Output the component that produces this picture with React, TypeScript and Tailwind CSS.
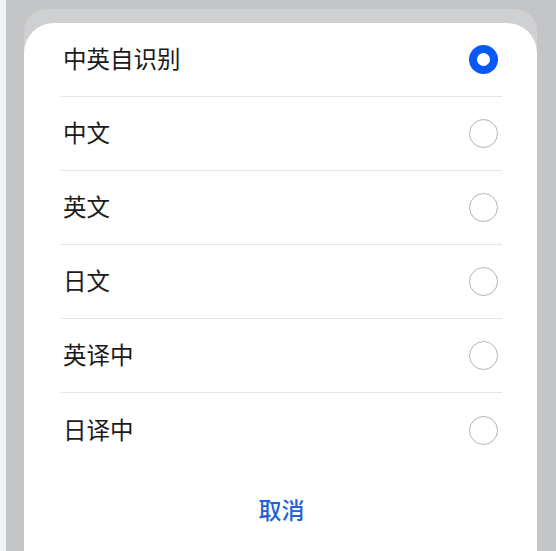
const options = ["中英自识别", "中文", "英文", "日文", "英译中", "日译中"]

function Radio({ checked }: { checked: boolean }) {
  if (checked) {
    return (
      <span className="w-[29px] h-[29px] rounded-full border-[8px] border-[#0a59f7] bg-white" />
    )
  }
  return <span className="w-[29px] h-[29px] rounded-full border-[1.5px] border-[#b4b4b4] bg-white" />
}

export default function App() {
  return (
    <div
      className="w-[556px] h-[551px] overflow-hidden flex bg-[#c4c5c7]"
      style={{ fontFamily: '"Noto Sans CJK SC", "Noto Sans", sans-serif' }}
    >
      <div className="w-[6px] h-full bg-[#f1f2f4]" />
      <div className="ml-[18px] mt-[9px] w-[513px] bg-[#cfd0d1] rounded-t-[22px] pt-[14px]">
        <div className="bg-white rounded-[30px] h-[560px] pl-[37px] pr-[35px]">
          {options.map((label, i) => (
            <div
              key={label}
              className={`h-[74px] flex items-center justify-between ${
                i < options.length - 1 ? "border-b border-[#e6e6e6]" : ""
              }`}
            >
              <span className="pl-[2px] mb-[1px] text-[23.5px] text-[#1b1b1b] leading-none">{label}</span>
              <span className="mr-[4px] flex">
                <Radio checked={i === 0} />
              </span>
            </div>
          ))}
          <div className="flex justify-center pt-[31px]">
            <span className="text-[23px] font-medium text-[#2460d6] leading-none">取消</span>
          </div>
        </div>
      </div>
    </div>
  )
}
